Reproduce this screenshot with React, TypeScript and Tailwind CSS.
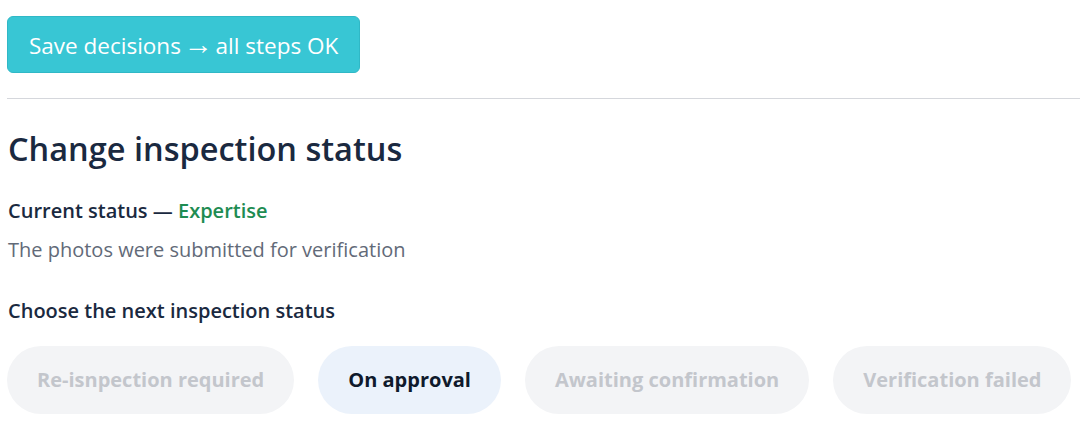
import React from 'react';

const statuses = [
  { label: 'Re-isnpection required', active: false },
  { label: 'On approval', active: true },
  { label: 'Awaiting confirmation', active: false },
  { label: 'Verification failed', active: false },
];

const App: React.FC = () => {
  return (
    <div className="min-h-screen bg-white pl-[7px] pt-4" style={{ fontFamily: '"Open Sans", "Noto Sans", sans-serif' }}>
      <button className="h-[57px] px-[21px] rounded-[6px] bg-[#38c6d4] border border-[#30b8c6] text-white text-[22.5px] leading-none">
        Save decisions{' '}
        <span className="-mx-[3px] text-[29px] leading-none" style={{ fontFamily: '"Liberation Sans", sans-serif' }}>→</span>{' '}
        all steps OK
      </button>
      <div className="mt-[25px] border-t border-[#d5d7dc]" />
      <h2 className="mt-[28px] pl-px text-[32.5px] leading-[44px] font-semibold text-[#1a2940]">Change inspection status</h2>
      <p className="mt-[26px] pl-px text-[20px] leading-7 font-semibold text-[#1a2940]">
        Current status — <span className="text-[#1e8c52]">Expertise</span>
      </p>
      <p className="mt-[11px] pl-px text-[20px] leading-7 text-[#626a78]">The photos were submitted for verification</p>
      <p className="mt-[33px] pl-px text-[20px] leading-7 font-semibold text-[#1a2940]">Choose the next inspection status</p>
      <div className="mt-[21px] flex gap-[24px]">
        {statuses.map((s) => (
          <button
            key={s.label}
            className={
              s.active
                ? 'h-[68px] px-[30px] rounded-full bg-[#ebf2fb] text-[#0f1a2c] text-[20px] font-bold'
                : 'h-[68px] px-[30px] rounded-full bg-[#f3f4f6] text-[#c3c6cc] text-[20px] font-bold'
            }
          >
            {s.label}
          </button>
        ))}
      </div>
    </div>
  );
};

export default App;
